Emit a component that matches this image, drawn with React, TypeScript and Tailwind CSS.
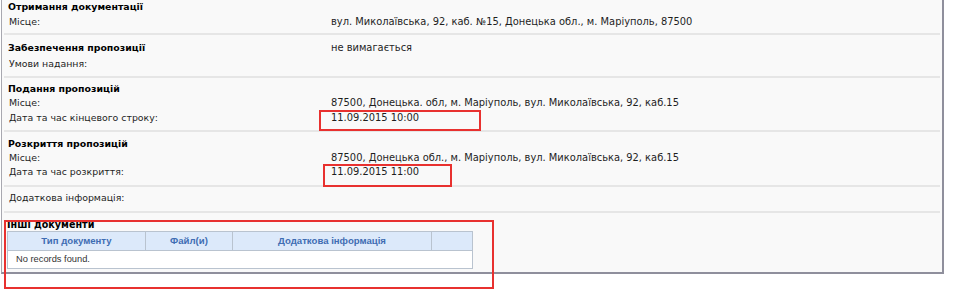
import React from 'react';

const font = { fontFamily: '"DejaVu Sans", Verdana, sans-serif' };

const Row: React.FC<{ label: string; value?: string; h: string; bold?: boolean }> = ({ label, value, h, bold }) => (
  <div className={`flex items-center ${h}`}>
    <div className={`w-[329px] shrink-0 text-[9.4px] ${bold ? 'font-bold pl-[6px] text-black' : 'pl-[7px]'}`}>{label}</div>
    {value && <div className="whitespace-nowrap text-[9.9px]">{value}</div>}
  </div>
);

const Sep = () => <div className="mx-[2px] h-[2px] bg-[#e6e6e6]" />;

const App: React.FC = () => {
  return (
    <div className="relative w-[960px] h-[298px] bg-white overflow-hidden text-[9.8px] text-[#1e1e1e]" style={font}>
      <div className="ml-[1px] w-[943px] bg-[#f9f9f9] border-l border-r-2 border-b-2 border-l-[#a8a8b0] border-r-[#8f8f9c] border-b-[#8f8f9c]">
        <div className="pb-[4px]">
          <Row label="Отримання документації" h="h-[15px]" bold />
          <Row label="Місце:" value="вул. Миколаївська, 92, каб. №15, Донецька обл., м. Маріуполь, 87500" h="h-[14px]" />
        </div>
        <Sep />
        <div className="pt-[5px] pb-[4px]">
          <Row label="Забезпечення пропозиції" value="не вимагається" h="h-[16px]" bold />
          <Row label="Умови надання:" h="h-[16px]" />
        </div>
        <Sep />
        <div className="pt-[4px] pb-[4px]">
          <Row label="Подання пропозицій" h="h-[14px]" bold />
          <Row label="Місце:" value="87500, Донецька. обл, м. Маріуполь, вул. Миколаївська, 92, каб.15" h="h-[15px]" />
          <Row label="Дата та час кінцевого строку:" value="11.09.2015 10:00" h="h-[15px]" />
        </div>
        <Sep />
        <div className="pt-[5px] pb-[5px]">
          <Row label="Розкриття пропозицій" h="h-[14px]" bold />
          <Row label="Місце:" value="87500, Донецька обл., м. Маріуполь, вул. Миколаївська, 92, каб.15" h="h-[14px]" />
          <Row label="Дата та час розкриття:" value="11.09.2015 11:00" h="h-[15px]" />
        </div>
        <Sep />
        <div className="pt-[4px] pb-[5px]">
          <Row label="Додаткова інформація:" h="h-[15px]" />
        </div>
        <Sep />
        <div className="pt-[6px] pb-[3px] pl-[5px]">
          <div className="h-[12px] leading-[12px] font-bold text-black text-[9.6px]">Інші документи</div>
          <table
            className="w-[466px] border-collapse border border-[#b9c3cf] bg-white"
            style={{ fontFamily: '"Liberation Sans", Arial, sans-serif' }}
          >
            <thead>
              <tr className="h-[19px] bg-[#dce9fa] text-[#3f6db3] text-[9.6px]">
                <th className="w-[138px] border border-[#b9c3cf] font-bold">Тип документу</th>
                <th className="w-[87px] border border-[#b9c3cf] font-bold">Файл(и)</th>
                <th className="w-[199px] border border-[#b9c3cf] font-bold">Додаткова інформація</th>
                <th className="border border-[#b9c3cf]"></th>
              </tr>
            </thead>
            <tbody>
              <tr className="h-[18px]">
                <td colSpan={4} className="pl-[8px] text-[#333] text-[9.3px]">No records found.</td>
              </tr>
            </tbody>
          </table>
        </div>
      </div>

      <div className="absolute left-[319px] top-[110px] w-[162px] h-[21px] border-2 border-[#e8312f]" />
      <div className="absolute left-[323px] top-[164px] w-[129px] h-[23px] border-2 border-[#e8312f]" />
      <div className="absolute left-[4px] top-[220px] w-[490px] h-[69px] border-2 border-[#e8312f]" />
    </div>
  );
};

export default App;
